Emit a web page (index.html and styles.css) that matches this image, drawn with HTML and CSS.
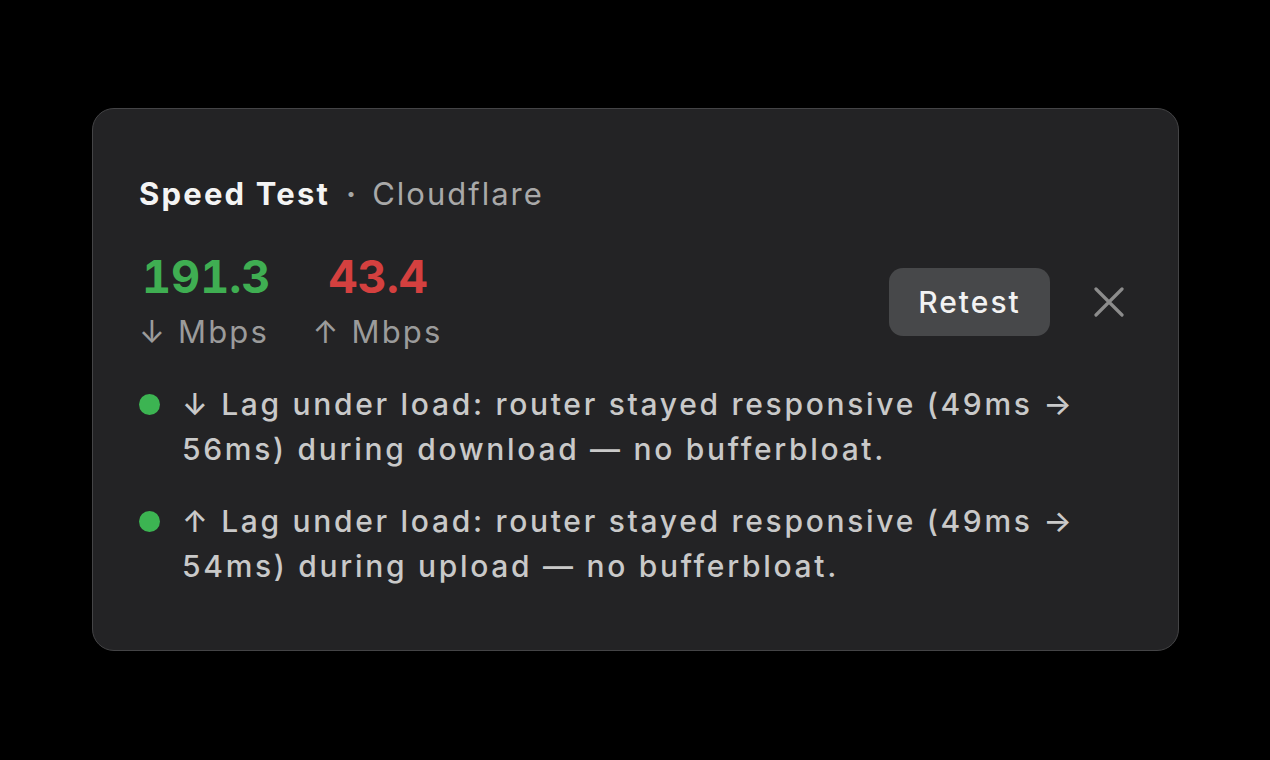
FILE: index.html
```html
<!DOCTYPE html>
<html>
<head>
<meta charset="utf-8">
<link rel="stylesheet" href="styles.css">
</head>
<body>
<div class="card">
  <div class="header">
    <span class="title">Speed Test</span>
    <span class="sep">·</span>
    <span class="provider">Cloudflare</span>
  </div>
  <div class="main">
    <div class="stats">
      <div class="stat">
        <div class="value down">191.3</div>
        <div class="unit">↓ Mbps</div>
      </div>
      <div class="stat">
        <div class="value up">43.4</div>
        <div class="unit">↑ Mbps</div>
      </div>
    </div>
    <div class="actions">
      <button class="retest">Retest</button>
      <button class="close" aria-label="Close">
        <svg width="30" height="30" viewBox="0 0 30 30"><path d="M2 2 L28 28 M28 2 L2 28" stroke="#8c8c8c" stroke-width="3.2" stroke-linecap="round"/></svg>
      </button>
    </div>
  </div>
  <ul class="notes">
    <li class="note"><span class="dot"></span><span class="note-text">↓ Lag under load: router stayed responsive (49ms → 56ms) during download — no bufferbloat.</span></li>
    <li class="note"><span class="dot"></span><span class="note-text">↑ Lag under load: router stayed responsive (49ms → 54ms) during upload — no bufferbloat.</span></li>
  </ul>
</div>
</body>
</html>
```
FILE: styles.css
```css
html, body {
  margin: 0;
  padding: 0;
  background: #000;
}
body {
  width: 1270px;
  height: 760px;
  font-family: Inter, "Noto Sans", sans-serif;
  padding-top: 108px;
  padding-left: 92px;
  box-sizing: border-box;
}
.card {
  width: 1087px;
  height: 543px;
  box-sizing: border-box;
  background: #232325;
  border: 1.5px solid #444446;
  border-radius: 22px;
  padding: 66px 54px 0 46px;
}
.header {
  display: flex;
  align-items: baseline;
  gap: 16px;
  line-height: 38px;
}
.title {
  font-size: 31px;
  font-weight: 700;
  color: #f4f4f4;
  letter-spacing: 2.2px;
}
.sep {
  font-size: 30px;
  font-weight: 700;
  color: #a6a6a6;
}
.provider {
  font-size: 31px;
  color: #a9a9a9;
  letter-spacing: 2px;
}
.main {
  display: flex;
  justify-content: space-between;
  align-items: center;
  margin-top: 38px;
}
.stats {
  display: flex;
  gap: 42px;
}
.value {
  font-size: 45px;
  font-weight: 700;
  line-height: 52px;
  letter-spacing: 0;
  font-variant-numeric: tabular-nums;
}
.value.down { color: #3fae52; padding-left: 3px; }
.value.up { color: #d4403f; padding-left: 16px; }
.unit {
  font-size: 31px;
  color: #9b9b9b;
  line-height: 52px;
  letter-spacing: 2.2px;
  margin-top: 3px;
}
.actions {
  display: flex;
  align-items: center;
  gap: 44px;
  margin-top: -5px;
}
.retest {
  width: 161px;
  height: 68px;
  border: none;
  border-radius: 14px;
  background: #47484a;
  color: #f2f2f2;
  font-family: Inter, "Noto Sans", sans-serif;
  font-size: 30px;
  font-weight: 500;
  letter-spacing: 2px;
  padding: 0;
}
.close {
  background: none;
  border: none;
  padding: 0;
  width: 30px;
  height: 30px;
  display: flex;
}
.notes {
  list-style: none;
  margin: 24px 0 0;
  padding: 0;
  display: flex;
  flex-direction: column;
  gap: 27px;
}
.note {
  display: flex;
  align-items: flex-start;
  gap: 22px;
}
.dot {
  flex: none;
  width: 21px;
  height: 21px;
  border-radius: 50%;
  background: #3cb452;
  margin-top: 12px;
}
.note-text {
  font-size: 30px;
  font-weight: 500;
  line-height: 45px;
  color: #c9c9c9;
  letter-spacing: 2.7px;
  max-width: 910px;
}
```
